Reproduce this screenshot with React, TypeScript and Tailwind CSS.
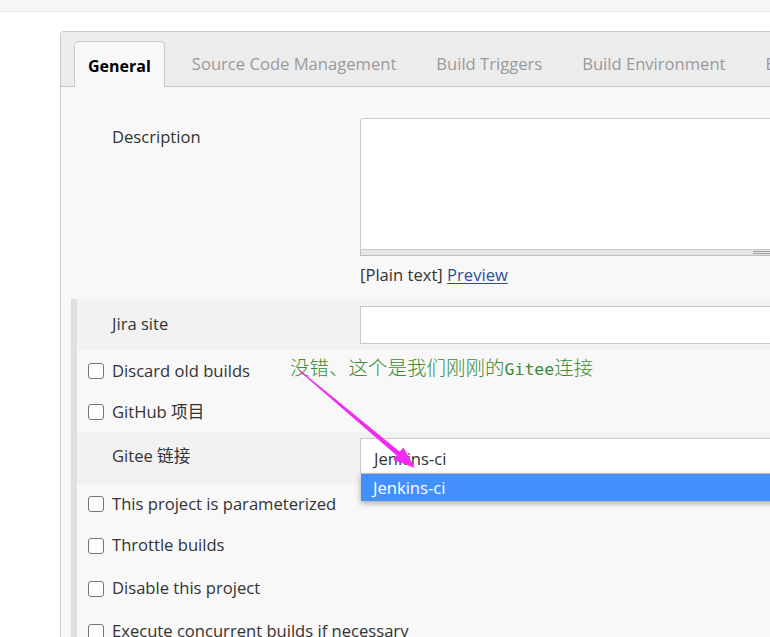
import React from 'react'

const font = '"Open Sans", "Noto Sans CJK SC", sans-serif'

const tabs = ['Source Code Management', 'Build Triggers', 'Build Environment', 'Build']

function Checkbox() {
    return <span className="inline-block h-[16px] w-[16px] shrink-0 rounded-[3px] border border-[#767676] bg-white" />
}

function CheckRow({ label, h }: { label: string; h: string }) {
    return (
        <div className={`flex items-center gap-[8px] pl-[11px] ${h}`}>
            <Checkbox />
            <span>{label}</span>
        </div>
    )
}

export default function App() {
    return (
        <div
            className="relative h-[637px] w-[770px] overflow-hidden bg-white text-[16.6px] text-[#333]"
            style={{ fontFamily: font }}
        >
            {/* page header strip */}
            <div className="h-[12px] border-b border-[#e6e6e6] bg-[#f6f6f6]" />

            <div className="pl-[60px] pt-[19px]">
                <div className="w-[760px] rounded-tl-[4px] border-l border-t border-[#c9c9c9] bg-[#f8f8f8]">
                    {/* tab bar */}
                    <div className="flex h-[55px] items-end border-b border-[#c9c9c9] bg-[#ececec] pl-[13px] whitespace-nowrap">
                        <div className="-mb-px flex h-[46px] items-center rounded-t-[5px] border border-b-0 border-[#c9c9c9] bg-[#f8f8f8] px-[13px] pt-[3px] text-[16px] font-bold text-black">
                            General
                        </div>
                        <div className="ml-[27px] flex h-[46px] items-center gap-[40px] pt-[3px] text-[#9a9a9a]">
                            {tabs.map((t) => (
                                <span key={t}>{t}</span>
                            ))}
                        </div>
                    </div>

                    {/* description */}
                    <div className="flex h-[212px] pt-[31px]">
                        <div className="w-[299px] shrink-0 pl-[51px] pt-[7px]">Description</div>
                        <div className="flex w-[460px] flex-col">
                            <div className="h-[132px] w-[500px] rounded-t-[3px] border border-[#c9c9c9] bg-white" />
                            <div className="relative h-[6px] w-[500px] border border-t-0 border-[#bdbdbd] bg-[#e6e6e6]">
                                <div className="absolute left-[392px] top-[1px] h-[3px] w-[30px] border-y border-[#a0a0a0]" />
                            </div>
                            <div className="mt-[7px]">
                                [Plain text]{' '}
                                <a className="text-[#2f4f9a] underline underline-offset-2">Preview</a>
                            </div>
                        </div>
                    </div>

                    {/* options */}
                    <div className="ml-[10px] border-l-[6px] border-[#e0e0e0]">
                        <div className="flex h-[51px] items-center bg-[#f2f2f2]">
                            <div className="w-[283px] shrink-0 pl-[35px]">Jira site</div>
                            <div className="h-[38px] w-[500px] border border-[#c9c9c9] bg-white" />
                        </div>
                        <CheckRow label="Discard old builds" h="h-[42px]" />
                        <CheckRow label="GitHub 项目" h="h-[40px]" />
                        <div className="flex h-[52px] items-start bg-[#f2f2f2] pt-[6px]">
                            <div className="flex h-[36px] w-[283px] shrink-0 items-center pl-[35px] pt-[1px]">Gitee 链接</div>
                            <div className="relative h-[36px] w-[500px]">
                                <div className="flex h-full items-center border border-[#c9c9c9] bg-white pl-[13px] pt-[7px]">Jenkins-ci</div>
                                <div className="absolute left-[1px] top-[36px] z-10 flex h-[27px] w-[500px] items-center bg-[#4290fd] pl-[12px] pt-[2px] text-white shadow-[0_2px_6px_rgba(0,0,0,0.35)]">
                                    Jenkins-ci
                                </div>
                            </div>
                        </div>
                        <CheckRow label="This project is parameterized" h="h-[40px]" />
                        <CheckRow label="Throttle builds" h="h-[43px]" />
                        <CheckRow label="Disable this project" h="h-[43px]" />
                        <CheckRow label="Execute concurrent builds if necessary" h="h-[43px]" />
                    </div>
                </div>
            </div>

            {/* annotation */}
            <div
                className="absolute left-[290px] top-[355px] whitespace-nowrap text-[19.5px] font-light leading-[24px] text-[#3a8c3a]"
                style={{ fontFamily: '"Noto Sans CJK SC", sans-serif' }}
            >
                没错、这个是我们刚刚的
                <span style={{ fontFamily: '"DejaVu Sans Mono", monospace' }} className="text-[16.5px] font-normal">Gitee</span>
                连接
            </div>
            <svg className="pointer-events-none absolute left-0 top-0 z-20" width="770" height="637">
                <polygon points="300.3,370.6 299.7,371.4 396.6,455.6 393,459.8 415,468 403.4,447.6 399.8,451.8" fill="#f02cf0" />
            </svg>
        </div>
    )
}
